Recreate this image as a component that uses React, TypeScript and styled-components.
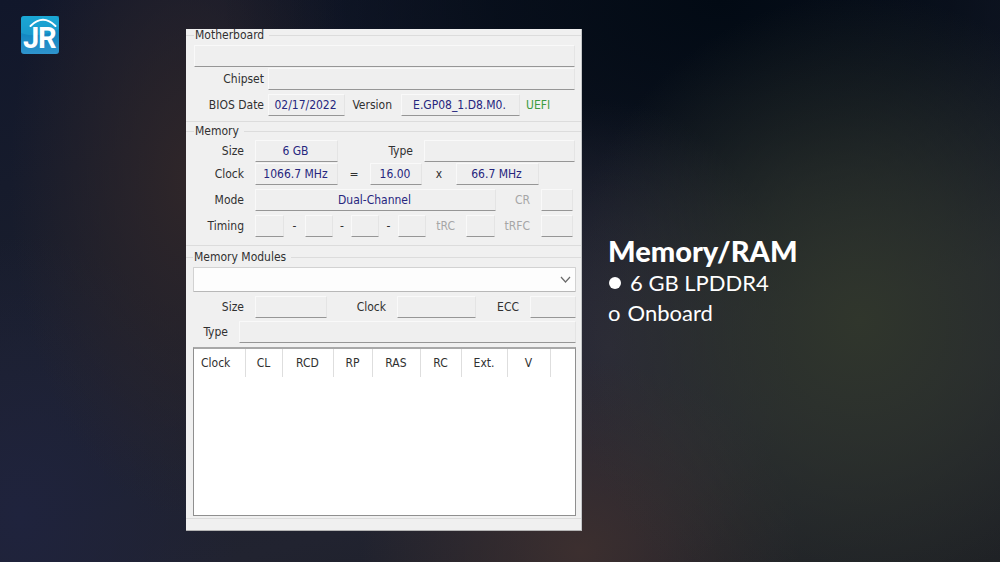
import React from "react";
import styled, { createGlobalStyle } from "styled-components";

const GlobalStyle = createGlobalStyle`
  *, *::before, *::after { box-sizing: border-box; }
  body { margin: 0; background: #1c1f2c; }
`;

const Slide = styled.div`
  display: grid;
  grid-template-columns: minmax(0, 93fr) minmax(0, 198fr) minmax(0, 209fr);
  min-height: 100vh;
  background:
    radial-gradient(ellipse 30% 58% at 86% 57%, #30362c 0%, rgba(48, 54, 44, 0.6) 45%, rgba(48, 54, 44, 0) 100%),
    radial-gradient(ellipse 22% 34% at 58% 98%, #3c2f2f 0%, rgba(60, 47, 47, 0) 100%),
    radial-gradient(ellipse 18% 44% at 61% 62%, #2b2a38 0%, rgba(43, 42, 56, 0) 100%),
    radial-gradient(ellipse 50% 56% at 72% 0%, #020a14 0%, rgba(2, 10, 20, 0.7) 45%, rgba(2, 10, 20, 0) 100%),
    radial-gradient(ellipse 18% 60% at 19% 32%, #2f2629 0%, rgba(47, 38, 41, 0) 100%),
    radial-gradient(ellipse 22% 50% at 2% 92%, #1f233d 0%, rgba(31, 35, 61, 0) 100%),
    linear-gradient(165deg, #11172b 0%, #1b1f2d 45%, #212330 75%, #1c1e24 100%);
`;

const LogoCell = styled.header`
  padding: 16px 0 0 21px;
  svg { display: block; }
`;

const Panel = styled.main`
  align-self: start;
  margin-top: 29px;
  padding-bottom: 11px;
  background: #f0f0f0;
  border-right: 1px solid #c4c6c8;
  border-bottom: 1px solid #b4b4b4;
  color: #303030;
  font: 12px/16px "DejaVu Sans Condensed", "Noto Sans", sans-serif;
`;

const Group = styled.fieldset<{ $space?: number; $bottom: number }>`
  min-width: 0;
  margin: ${(p) => p.$space ?? 0}px 0 0;
  padding: 0 6px ${(p) => p.$bottom}px 8px;
  border: 1px solid #dcdcdc;
  border-width: 1px 0;
`;

const ModulesGroup = styled(Group)`
  padding-left: 7px;
  padding-right: 5px;
`;

const Legend = styled.legend`
  padding: 0 5px 0 1px;
  line-height: 12px;
`;

const Row = styled.div<{ $cols: string; $gap: number }>`
  display: grid;
  grid-template-columns: ${(p) => p.$cols};
  align-items: center;
  margin-top: ${(p) => p.$gap}px;
`;

const Label = styled.label<{ $pad?: number; $muted?: boolean }>`
  padding-right: ${(p) => p.$pad ?? 11}px;
  text-align: right;
  white-space: nowrap;
  color: ${(p) => (p.$muted ? "#a6a6a6" : "inherit")};
`;

const Sign = styled.span`
  text-align: center;
`;

const Uefi = styled.span`
  padding-left: 6px;
  color: #3c9c40;
`;

const Field = styled.input`
  width: 100%;
  min-width: 0;
  height: 22px;
  padding: 0 2px 1px 0;
  border: 1px solid #f9f9f9;
  border-right-color: #e4e4e4;
  border-bottom-color: #969696;
  border-radius: 1px;
  background: #efefef;
  color: #26267e;
  font: inherit;
  text-align: center;
  outline: none;
`;

const SelectWrap = styled.div`
  position: relative;
  margin-top: 4px;
  svg {
    position: absolute;
    right: 5px;
    top: 9px;
    pointer-events: none;
  }
`;

const Select = styled.select`
  display: block;
  width: 100%;
  height: 25px;
  border: 1px solid #d2d2d2;
  border-bottom-color: #b8b8b8;
  border-radius: 1px;
  background: #fdfdfd;
  appearance: none;
  font: inherit;
`;

const TableBox = styled.div`
  min-height: 169px;
  margin-top: 4px;
  border: 1px solid #8f8f8f;
  border-top: 2px solid #a8a8a8;
  background: #ffffff;
`;

const Table = styled.table`
  width: 100%;
  table-layout: fixed;
  border-collapse: collapse;
`;

const Head = styled.th<{ $start?: boolean }>`
  height: 28px;
  padding: ${(p) => (p.$start ? "0 0 0 7px" : "0")};
  border-right: 1px solid #dedede;
  font-weight: 400;
  text-align: ${(p) => (p.$start ? "left" : "center")};
`;

const Notes = styled.section`
  align-self: center;
  padding-left: 26px;
  color: #ffffff;
  font-family: Lato, sans-serif;
`;

const Title = styled.h1`
  margin: 0;
  font-size: 29px;
  font-weight: 900;
  line-height: 34px;
`;

const List = styled.ul`
  margin: 0;
  padding: 0;
  list-style: none;
  font-size: 22px;
  line-height: 30px;
`;

const Item = styled.li`
  display: flex;
  gap: 7px;
`;

const Dot = styled.span`
  align-self: center;
  width: 12px;
  height: 12px;
  margin: 0 2px 0 1px;
  border-radius: 50%;
  background: #ffffff;
`;

const columns = [
  { name: "Clock", width: 51 },
  { name: "CL", width: 37 },
  { name: "RCD", width: 51 },
  { name: "RP", width: 39 },
  { name: "RAS", width: 48 },
  { name: "RC", width: 41 },
  { name: "Ext.", width: 46 },
  { name: "V", width: 43 },
];

const Box = ({ id, value = "", label }: { id?: string; value?: string; label?: string }) => (
  <Field id={id} value={value} aria-label={label} readOnly />
);

const Logo = () => (
  <svg width="38" height="38" viewBox="0 0 38 38" role="img" aria-label="JR">
    <defs>
      <linearGradient id="sky" x1="0" y1="0" x2="0" y2="1">
        <stop offset="0" stopColor="#14a3d2" />
        <stop offset="0.5" stopColor="#1488c2" />
        <stop offset="1" stopColor="#2f94cd" />
      </linearGradient>
    </defs>
    <rect width="38" height="38" rx="3" fill="url(#sky)" />
    <path d="M0 17 C10 21 24 20 38 13 V0 H3 Q0 0 0 3 Z" fill="#22acd8" opacity="0.45" />
    <path d="M9.500 10 Q22 -2.500 34.500 10" fill="none" stroke="#fff" strokeWidth="2" strokeLinecap="round" />
    <text x="2" y="32" fill="#fff" fontFamily="Roboto, sans-serif" fontWeight="700" fontSize="29">J</text>
    <text x="17" y="32" fill="#fff" fontFamily="Roboto, sans-serif" fontWeight="700" fontSize="29">R</text>
  </svg>
);

export default function App() {
  return (
    <>
      <GlobalStyle />
      <Slide>
        <LogoCell>
          <Logo />
        </LogoCell>

        <Panel>
          <Group $bottom={5}>
            <Legend>Motherboard</Legend>
            <Row $cols="minmax(0, 1fr)" $gap={4}>
              <Box label="Motherboard" />
            </Row>
            <Row $cols="74px minmax(0, 1fr)" $gap={1}>
              <Label $pad={4} htmlFor="chipset">Chipset</Label>
              <Box id="chipset" />
            </Row>
            <Row $cols="74px minmax(0, 77fr) 56px minmax(0, 119fr) 55px" $gap={4}>
              <Label $pad={4} htmlFor="bios">BIOS Date</Label>
              <Box id="bios" value="02/17/2022" />
              <Label $pad={9} htmlFor="version">Version</Label>
              <Box id="version" value="E.GP08_1.D8.M0." />
              <Uefi>UEFI</Uefi>
            </Row>
          </Group>

          <Group $space={3} $bottom={8}>
            <Legend>Memory</Legend>
            <Row $cols="61px minmax(0, 83fr) 86px minmax(0, 151fr)" $gap={3}>
              <Label htmlFor="size">Size</Label>
              <Box id="size" value="6 GB" />
              <Label htmlFor="type">Type</Label>
              <Box id="type" />
            </Row>
            <Row $cols="61px minmax(0, 83fr) 32px minmax(0, 52fr) 34px minmax(0, 83fr) 36px" $gap={1}>
              <Label htmlFor="clock">Clock</Label>
              <Box id="clock" value="1066.7 MHz" />
              <Sign>=</Sign>
              <Box label="Multiplier" value="16.00" />
              <Sign>x</Sign>
              <Box label="Base clock" value="66.7 MHz" />
            </Row>
            <Row $cols="61px minmax(0, 1fr) 45px 32px 2px" $gap={4}>
              <Label htmlFor="mode">Mode</Label>
              <Box id="mode" value="Dual-Channel" />
              <Label $muted htmlFor="cr">CR</Label>
              <Box id="cr" />
            </Row>
            <Row
              $cols="61px minmax(0, 29fr) 21px minmax(0, 28fr) 18px minmax(0, 28fr) 19px minmax(0, 28fr) 40px minmax(0, 29fr) 46px 32px 2px"
              $gap={4}
            >
              <Label htmlFor="timing">Timing</Label>
              <Box id="timing" />
              <Sign>-</Sign>
              <Box label="Timing 2" />
              <Sign>-</Sign>
              <Box label="Timing 3" />
              <Sign>-</Sign>
              <Box label="Timing 4" />
              <Label $muted htmlFor="trc">tRC</Label>
              <Box id="trc" />
              <Label $muted htmlFor="trfc">tRFC</Label>
              <Box id="trfc" />
            </Row>
          </Group>

          <ModulesGroup $space={5} $bottom={2}>
            <Legend>Memory Modules</Legend>
            <SelectWrap>
              <Select aria-label="Memory module">
                <option></option>
              </Select>
              <svg width="11" height="8" viewBox="0 0 11 8">
                <path d="M1 1 L5.500 6 L10 1" fill="none" stroke="#6b6b6b" strokeWidth="1.200" />
              </svg>
            </SelectWrap>
            <Row $cols="62px minmax(0, 72fr) 70px minmax(0, 79fr) 54px minmax(0, 46fr)" $gap={4}>
              <Label htmlFor="m-size">Size</Label>
              <Box id="m-size" />
              <Label htmlFor="m-clock">Clock</Label>
              <Box id="m-clock" />
              <Label htmlFor="m-ecc">ECC</Label>
              <Box id="m-ecc" />
            </Row>
            <Row $cols="46px minmax(0, 1fr)" $gap={3}>
              <Label htmlFor="m-type">Type</Label>
              <Box id="m-type" />
            </Row>
            <TableBox>
              <Table>
                <colgroup>
                  {columns.map((c) => (
                    <col key={c.name} width={c.width} />
                  ))}
                  <col />
                </colgroup>
                <thead>
                  <tr>
                    {columns.map((c, i) => (
                      <Head key={c.name} $start={i === 0} scope="col">{c.name}</Head>
                    ))}
                    <td />
                  </tr>
                </thead>
              </Table>
            </TableBox>
          </ModulesGroup>
        </Panel>

        <Notes>
          <Title>Memory/RAM</Title>
          <List>
            <Item><Dot />6 GB LPDDR4</Item>
            <Item><span>o</span>Onboard</Item>
          </List>
        </Notes>
      </Slide>
    </>
  );
}
